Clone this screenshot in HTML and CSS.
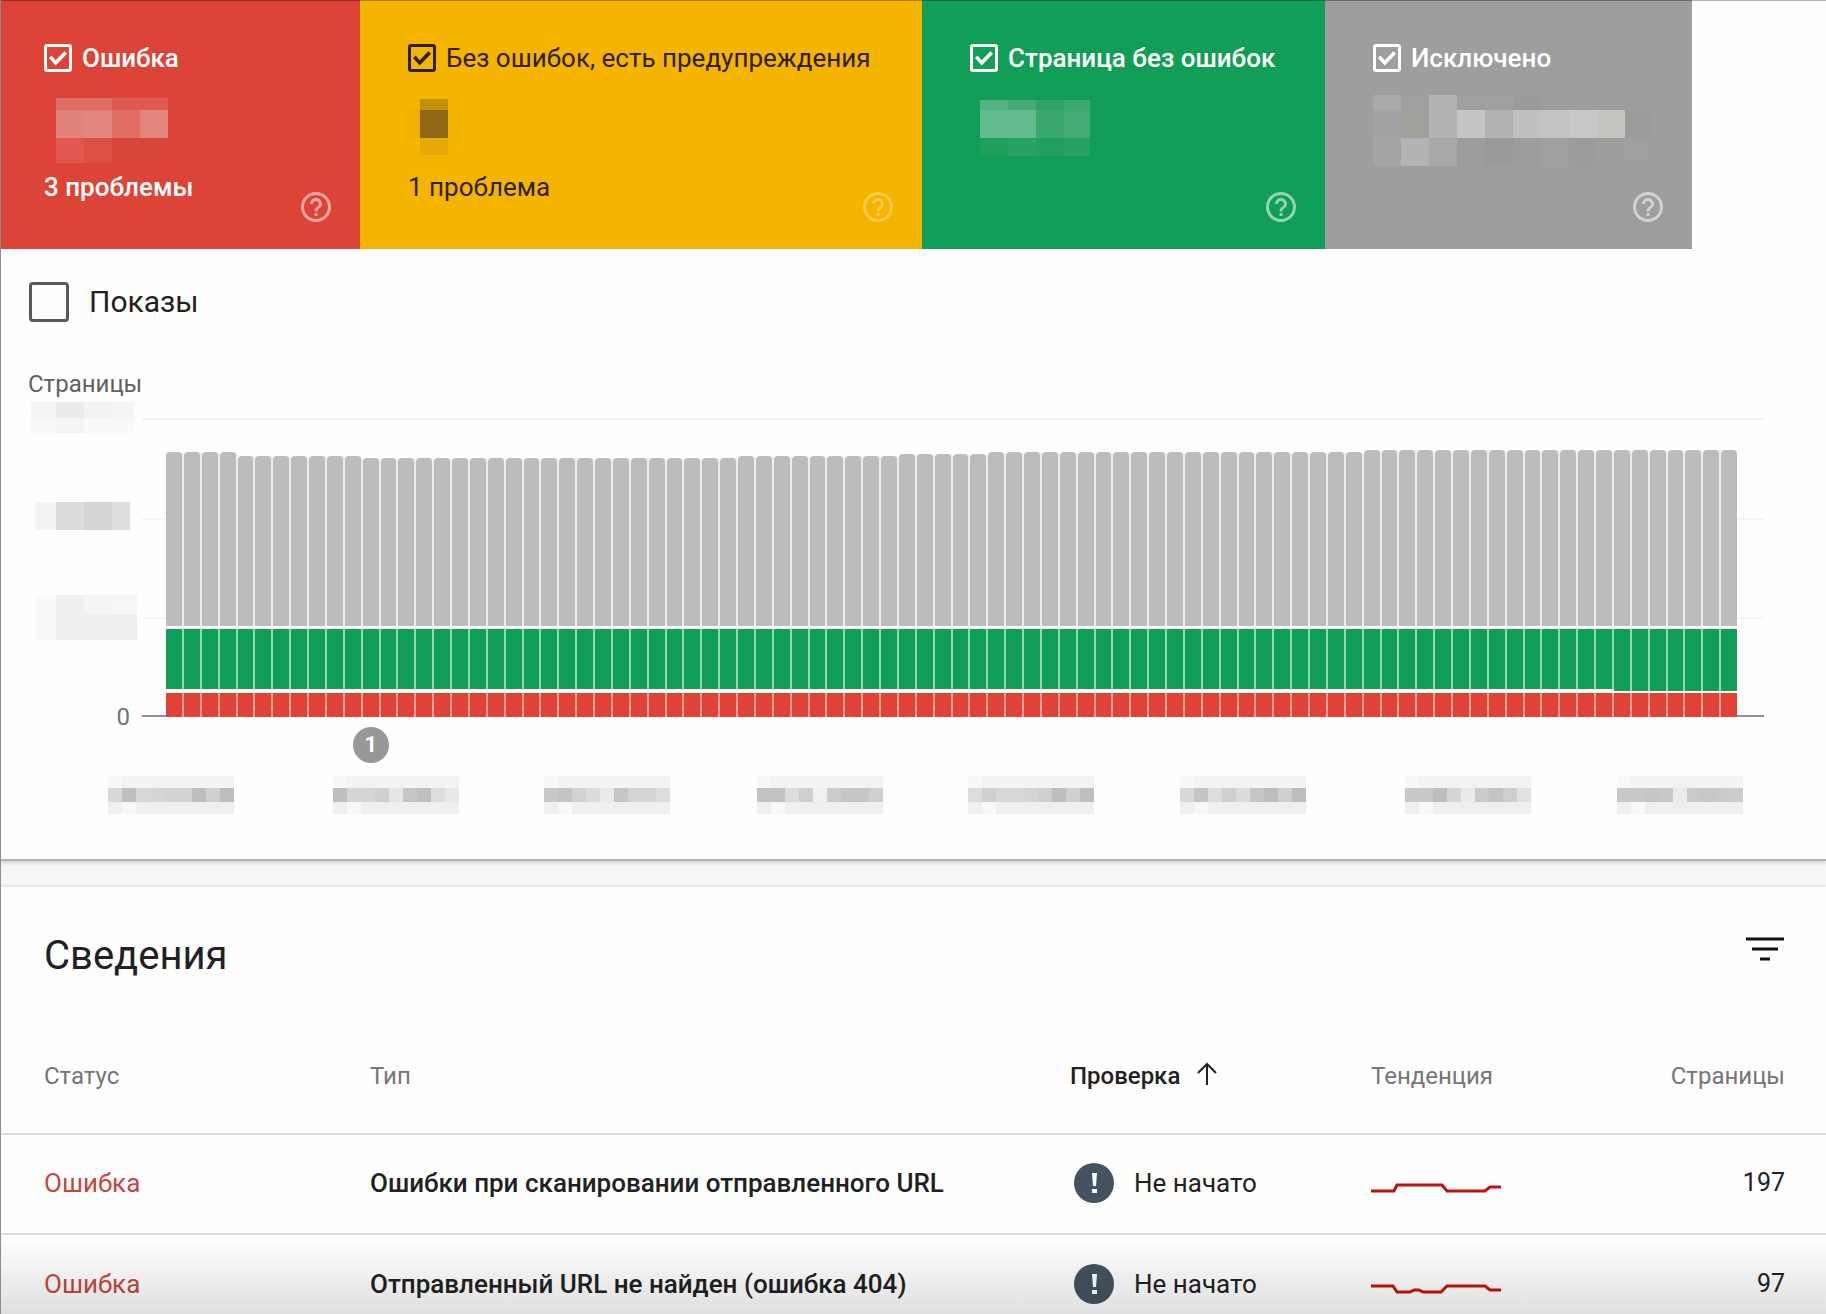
FILE: index.html
```html
<!DOCTYPE html>
<html lang="ru">
<head>
<meta charset="utf-8">
<title>Покрытие</title>
<link rel="stylesheet" href="styles.css">
</head>
<body>
<svg class="defs" aria-hidden="true">
  <symbol id="help" viewBox="0 0 24 24"><path d="M11 18h2v-2h-2v2zm1-16C6.480 2 2 6.480 2 12s4.480 10 10 10 10-4.480 10-10S17.520 2 12 2zm0 18c-4.410 0-8-3.590-8-8s3.590-8 8-8 8 3.590 8 8-3.590 8-8 8zm0-14c-2.210 0-4 1.790-4 4h2c0-1.100.9-2 2-2s2 .9 2 2c0 2-3 1.750-3 5h2c0-2.250 3-2.500 3-5 0-2.210-1.790-4-4-4z"/></symbol>
  <symbol id="alert" viewBox="0 0 40 40"><circle cx="20" cy="20" r="20" fill="#44535f"/><path d="M18 10h5l-1 13h-3zM18 26h5v4h-5z" fill="#fff"/></symbol>
</svg>
<main class="page">
  <section class="panel">
    <div class="cards">
      <div class="card card-error">
        <label class="card-label"><input type="checkbox" class="tick" checked>Ошибка</label>
        <div class="mosaic card-value" data-x="0 12 40 68 96 124" data-y="0 3 15 43 68" data-c="- - - - -|- df6f66 df6f66 de5a51 de5a51|- e2837b e2857d e06d63 e2857c|- e0584e de5046 da4539 da4539"></div>
        <div class="card-foot"><span>3 проблемы</span><button class="help" aria-label="Справка"><svg><use href="#help"/></svg></button></div>
      </div>
      <div class="card card-warning">
        <label class="card-label"><input type="checkbox" class="tick" checked>Без ошибок, есть предупреждения</label>
        <div class="mosaic card-value" data-x="0 12 40" data-y="0 4 15 43 60" data-c="- -|- c0910d|f1b006 8f6815|- e6a907"></div>
        <div class="card-foot"><span>1 проблема</span><button class="help" aria-label="Справка"><svg><use href="#help"/></svg></button></div>
      </div>
      <div class="card card-valid">
        <label class="card-label"><input type="checkbox" class="tick" checked>Страница без ошибок</label>
        <div class="mosaic card-value" data-x="0 10 38 66 94 120" data-y="0 5 15 43 61" data-c="- - - - -|- 55b183 47a975 35a369 3fa86e|- 62ba8e 62ba8e 3aa86d 45ab74|- 1e9f5a 26a362 21a05e 26a362"></div>
        <div class="card-foot"><span></span><button class="help" aria-label="Справка"><svg><use href="#help"/></svg></button></div>
      </div>
      <div class="card card-excluded">
        <label class="card-label"><input type="checkbox" class="tick" checked>Исключено</label>
        <div class="mosaic card-value" data-x="0 28 56 84 112 140 168 196 224 252 280" data-y="0 15 43 71" data-c="a9aaac 9f9f9f b3b3b3 a19e9e a0a0a0 999b9a - - - -|a3a3a6 a19f9a b3b3b3 c5c5c5 b5b2b2 c0c0c0 c3c3c3 c6c9c7 c3c3c0 9c9c9c|a5a5a5 b3b3b3 a9a9a9 9d9d9d 9a9a9a 9d9d9d a19f9f 9c9c9c a09d9d 9f9f9f"></div>
        <div class="card-foot"><span></span><button class="help" aria-label="Справка"><svg><use href="#help"/></svg></button></div>
      </div>
    </div>

    <label class="impressions"><input type="checkbox" class="box">Показы</label>

    <div class="axis-title">Страницы</div>
    <div class="chart">
      <div class="y-axis">
        <div class="mosaic" data-x="0 25 53 81 103" data-y="0 16 31" data-c="f5f5f5 ebebeb f2f2f2 f5f5f5|f9f9f9 f4f4f4 f9f9f9 f9f9f9"></div>
        <div class="mosaic" data-x="0 4 25 53 81 99" data-y="0 28" data-c="- f2f2f2 dcdcdc d5d5d5 dedede"></div>
        <div class="mosaic" data-x="0 5 25 53 81 106" data-y="0 19 45" data-c="- f9f9f9 efefef f5f5f5 f7f7f7|- f9f9f9 efefef eeeeee eeeeee"></div>
        <span class="zero">0</span>
      </div>
      <div class="plot-col">
        <div class="plot" id="plot"></div>
        <button class="marker">1</button>
      </div>
    </div>
    <div class="x-axis" id="x-axis"></div>
  </section>

  <section class="panel details">
    <header class="details-head">
      <h2>Сведения</h2>
      <button class="filter" aria-label="Фильтр"><svg width="38" height="24" viewBox="0 0 38 24"><path d="M0 2h38M6 12h26M14 22h10" stroke="#111" stroke-width="3"/></svg></button>
    </header>
    <table>
      <colgroup><col class="c-status"><col><col class="c-check"><col class="c-trend"><col class="c-pages"></colgroup>
      <thead>
        <tr>
          <th>Статус</th><th>Тип</th>
          <th class="sorted"><span class="cell">Проверка<svg class="arrow" width="22" height="24" viewBox="0 0 22 24"><path d="M11 23V2M2 11L11 2l9 9" fill="none" stroke="#222" stroke-width="2"/></svg></span></th>
          <th>Тенденция</th><th class="num">Страницы</th>
        </tr>
      </thead>
      <tbody>
        <tr>
          <td class="error">Ошибка</td><td class="type">Ошибки при сканировании отправленного URL</td>
          <td><span class="cell status"><svg width="40" height="40"><use href="#alert"/></svg>Не начато</span></td>
          <td><svg class="trend" width="130" height="12" viewBox="0 0 130 12"><path d="M0 9H23L26 3H71L76 9H114L119 5H130"/></svg></td>
          <td class="num">197</td>
        </tr>
        <tr>
          <td class="error">Ошибка</td><td class="type">Отправленный URL не найден (ошибка 404)</td>
          <td><span class="cell status"><svg width="40" height="40"><use href="#alert"/></svg>Не начато</span></td>
          <td><svg class="trend" width="130" height="12" viewBox="0 0 130 12"><path d="M0 3H22L26 9H39L43 7H48L52 9H70L76 3H114L119 7H130"/></svg></td>
          <td class="num">97</td>
        </tr>
      </tbody>
    </table>
  </section>
  <div class="fade"></div>
</main>
<script src="app.js"></script>
</body>
</html>
```
FILE: styles.css
```css
* { box-sizing: border-box; }
body { margin: 0; background: #f7f7f7; color: #212121; font: 24px/32px Roboto, "Liberation Sans", sans-serif; }
button { padding: 0; border: 0; background: none; color: inherit; font: inherit; }
.defs { position: absolute; width: 0; height: 0; }
.page { position: relative; height: 100vh; overflow: hidden; border-left: 1px solid #8c8c8c; }
.page::before { content: ""; position: absolute; inset: 0 0 auto; height: 1px; background: rgba(0, 0, 0, .3); }
.panel { background: #fefefe; border-bottom: 2px solid #b0b0b0; box-shadow: 0 2px 4px rgba(0, 0, 0, .16); }

.cards { display: flex; }
.card { display: flex; flex-direction: column; flex: 0 1 403px; height: 249px; padding: 42px 26px 24px 48px; color: #fff; font-size: 26px; font-weight: 500; }
.card-error { flex-basis: 359px; padding-left: 43px; background: #dc4437; }
.card-warning { flex-basis: 562px; background: #f4b400; color: #2e2008; font-weight: 400; }
.card-valid { background: #119e56; }
.card-excluded { flex-basis: 367px; background: #9e9e9e; }
.card-label { display: flex; align-items: center; gap: 10px; white-space: nowrap; }
.tick { appearance: none; display: grid; place-items: center; flex: none; width: 28px; height: 28px; margin: 0; border: 3px solid; border-radius: 3px; color: inherit; }
.tick:checked::after { content: ""; width: 18px; height: 18px; background: currentColor; clip-path: polygon(0 50%, 14% 36%, 37% 62%, 86% 12%, 100% 26%, 37% 92%); }
.card-value { height: 71px; margin-top: 21px; }
.card-foot { display: flex; justify-content: space-between; flex: 1; padding-top: 5px; }
.help { align-self: flex-end; width: 36px; height: 36px; color: #fff; opacity: .55; }
.card-warning .help { opacity: .3; }
.help svg { display: block; width: 36px; height: 36px; fill: currentColor; }
.mosaic svg, .x-axis svg { display: block; }

.impressions { display: flex; align-items: center; gap: 20px; width: max-content; margin: 33px 0 46px 28px; height: 40px; font-size: 30px; }
.box { appearance: none; width: 40px; height: 40px; margin: 0; border: 3px solid #595959; border-radius: 4px; }
.axis-title { padding-left: 27px; color: #616161; }

.chart { display: grid; grid-template-columns: 111px 1fr; padding: 2px 62px 0 30px; }
.y-axis { display: grid; grid-template-rows: 100px 93px 106px 32px; }
.zero { padding-right: 12px; text-align: right; color: #757575; }
.plot-col { padding-top: 16px; }
.plot { display: flex; align-items: flex-end; gap: 2px; height: 299px; padding: 0 27px 0 24px;
  background: linear-gradient(#f2f2f2, #f2f2f2) 0 0 / 100% 2px no-repeat, linear-gradient(#f5f5f5, #f5f5f5) 0 100px / 100% 2px no-repeat, linear-gradient(#f5f5f5, #f5f5f5) 0 199px / 100% 2px no-repeat, linear-gradient(#909090, #909090) 0 100% / 100% 2px no-repeat; }
.bar { flex: 1; }
.seg-excluded { margin-bottom: 3px; border-radius: 4px 4px 0 0; background: #bcbcbc; box-shadow: 2px 0 0 #ededed; }
.seg-valid { height: 60px; margin-bottom: 4px; background: #119e56; box-shadow: 2px 0 0 #8edbb2; }
.bar-low .seg-valid { height: 62px; margin-bottom: 2px; }
.seg-error { height: 24px; background: #df4336; box-shadow: 2px 0 0 #f4a097; }
.bar:last-child div { box-shadow: none; }
.marker { display: block; width: 36px; height: 36px; margin: 10px 0 0 13%; border-radius: 50%; background: #989898; color: #fff; font-size: 22px; font-weight: 700; line-height: 32px; }
.x-axis { display: grid; grid-template-columns: 225fr 211fr 213fr 211fr 212fr 225fr 212fr 126fr; padding: 13px 83px 45px 107px; }

.details { margin-top: 26px; border: 0; box-shadow: 0 -1px 4px rgba(0, 0, 0, .14); }
.details-head { display: flex; justify-content: space-between; padding: 45px 42px 0 43px; height: 93px; }
h2 { margin: 0; font-size: 40px; font-weight: 400; line-height: 48px; }
.filter { height: 34px; }
.filter svg, .cell svg { display: block; }
table { width: 100%; table-layout: fixed; border-collapse: collapse; }
.c-status { width: 369px; }
.c-check { width: 301px; }
.c-trend { width: 170px; }
.c-pages { width: 285px; }
th, td { padding: 0; text-align: left; white-space: nowrap; }
th { padding: 80px 0 41px; color: #757575; font-weight: 400; }
td { height: 100px; padding-bottom: 2px; border-top: 2px solid #dcdcdc; font-size: 26px; }
th:first-child, td:first-child { padding-left: 43px; }
.num { padding-right: 41px; text-align: right; }
td.num { font-size: 25px; }
.sorted { color: #212121; font-weight: 500; }
.arrow { margin-bottom: 4px; }
.error { color: #c5473b; }
.type { font-weight: 500; }
.cell { display: flex; align-items: center; gap: 16px; }
.status { gap: 20px; padding-left: 4px; }
.trend { display: block; margin-top: 10px; fill: none; stroke: #c5110b; stroke-width: 3; }
.fade { position: absolute; inset: auto 0 0; height: 76px; background: linear-gradient(rgba(0, 0, 0, 0), rgba(0, 0, 0, .12)); pointer-events: none; }
```
FILE: app.js
```js
// Draws a block of hidden (pixelated) text as a grid of coloured cells.
function mosaic(xs, ys, rows) {
  let cells = '';
  rows.forEach((row, r) => row.forEach((c, i) => {
    if (c === '-') return;
    cells += `<rect x="${xs[i]}" y="${ys[r]}" width="${xs[i + 1] - xs[i]}" height="${ys[r + 1] - ys[r]}" fill="#${c}"/>`;
  }));
  const w = xs[xs.length - 1], h = ys[ys.length - 1];
  return `<svg width="${w}" height="${h}" shape-rendering="crispEdges" aria-hidden="true">${cells}</svg>`;
}
document.querySelectorAll('.mosaic').forEach(el => {
  const nums = s => s.split(' ').map(Number);
  el.innerHTML = mosaic(nums(el.dataset.x), nums(el.dataset.y), el.dataset.c.split('|').map(r => r.split(' ')));
});

// Daily bars: [number of days, height of the excluded part].
const runs = [[4, 174], [7, 170], [21, 168], [9, 170], [5, 172], [21, 174], [21, 176]];
let bars = '', n = 0;
runs.forEach(([days, h]) => {
  for (let i = 0; i < days; i++, n++) {
    bars += `<div class="bar${n > 80 ? ' bar-low' : ''}"><div class="seg-excluded" style="height:${h}px"></div><div class="seg-valid"></div><div class="seg-error"></div></div>`;
  }
});
document.getElementById('plot').innerHTML = bars;

// Date labels.
const dates = [
  'd8 bf d8 d6 d3 d3 be cf bd', 'bf d6 d6 cf e6 c6 bf dd e8', 'c8 c4 d2 dc ea c6 d4 d4 dd', 'c2 c2 dc cf f0 cc c6 c6 cf',
  'dd cf d8 d8 d4 cf be cf bf', 'd8 c5 dd cf dc c6 bd cf bd', 'c9 c9 bd d6 ea cb c4 ce e2', 'c8 c8 c6 c8 ec ca c8 ca cc'
];
const xs = [0, 14, 28, 42, 56, 70, 84, 98, 112, 126];
document.getElementById('x-axis').innerHTML = dates.map(d => {
  const mid = d.split(' ').map(v => v + v + v);
  const soft = (v, i) => mid.map((c, k) => (k === i ? 'f8f8f8' : v));
  return `<div>${mosaic(xs, [0, 12, 26, 38], [soft('f3f3f3', 0), mid, soft('efefef', 1)])}</div>`;
}).join('');
```
